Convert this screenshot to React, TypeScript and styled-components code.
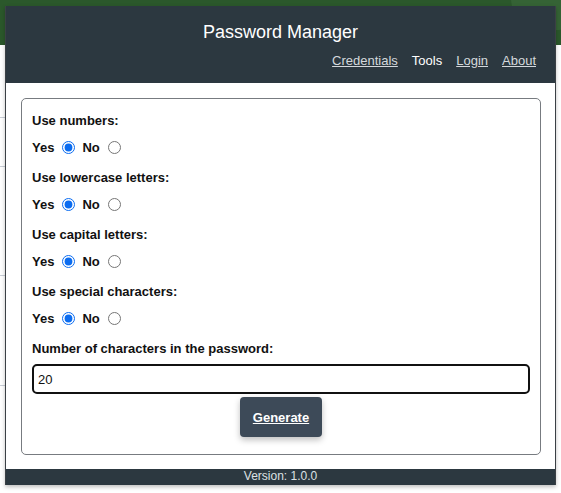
import { useState } from "react";
import styled, { createGlobalStyle } from "styled-components";

const GlobalStyle = createGlobalStyle`
  html, body {
    margin: 0;
    padding: 0;
    background: #ffffff;
    font-family: "Liberation Sans", Arial, sans-serif;
  }
`;

const Page = styled.div`
  position: relative;
  width: 561px;
  height: 493px;
  overflow: hidden;
  background: #ffffff;
`;

const GreenBar = styled.div`
  height: 45px;
  background: #2b582b;
  position: relative;
  overflow: hidden;
`;

const GreenBlob = styled.div`
  position: absolute;
  right: -40px;
  top: -30px;
  width: 90px;
  height: 60px;
  border-radius: 50%;
  background: #356335;
`;

const SideLines = styled.div`
  display: flex;
  flex-direction: column;
  width: 6px;
`;

const SideLine = styled.div<{ $gap: number }>`
  margin-top: ${(p) => p.$gap}px;
  height: 1px;
  background: #c9ced6;
`;

const Popup = styled.div`
  position: absolute;
  left: 5px;
  top: 6px;
  width: 549px;
  border-left: 1px solid #3b4045;
  border-right: 1px solid #3b4045;
  background: #ffffff;
  box-shadow: 0 2px 4px rgba(0, 0, 0, 0.25);
  display: flex;
  flex-direction: column;
`;

const Header = styled.header`
  height: 77px;
  background: #2c3840;
  display: flex;
  flex-direction: column;
  box-sizing: border-box;
  padding: 15px 19px 0 0;
`;

const Title = styled.h1`
  margin: 0;
  text-align: center;
  font-size: 18px;
  font-weight: normal;
  line-height: 22px;
  color: #ffffff;
  padding-left: 19px;
`;

const Nav = styled.nav`
  display: flex;
  justify-content: flex-end;
  gap: 14px;
  margin-top: 10px;
`;

const NavLink = styled.a<{ $active?: boolean }>`
  font-size: 13px;
  line-height: 16px;
  color: ${(p) => (p.$active ? "#ffffff" : "#d4d8dc")};
  text-decoration: ${(p) => (p.$active ? "none" : "underline")};
  cursor: pointer;
`;

const Main = styled.main`
  padding: 15px 14px 14px 15px;
`;

const Card = styled.form`
  border: 1px solid #777b80;
  border-radius: 5px;
  padding: 14px 10px 17px 10px;
  display: flex;
  flex-direction: column;
`;

const Group = styled.div`
  display: flex;
  flex-direction: column;
  gap: 10px;
  margin-bottom: 15px;
`;

const Label = styled.div`
  font-size: 13px;
  font-weight: bold;
  line-height: 16px;
  color: #111111;
`;

const RadioRow = styled.div`
  display: flex;
  align-items: center;
  height: 16px;
  font-size: 13px;
  font-weight: bold;
  color: #111111;
`;

const Radio = styled.input`
  width: 13px;
  height: 13px;
  margin: 0 7px 0 8px;
  accent-color: #0b6cf0;
`;

const LengthInput = styled.input`
  margin-top: 7px;
  box-sizing: border-box;
  width: 100%;
  height: 30px;
  border: 2px solid #111111;
  border-radius: 5px;
  padding: 0 4px;
  font-family: "Liberation Sans", Arial, sans-serif;
  font-size: 13px;
  color: #111111;
  outline: none;
`;

const GenerateButton = styled.button`
  align-self: center;
  margin-top: 3px;
  width: 82px;
  height: 40px;
  border: none;
  border-radius: 4px;
  background: #3d4a58;
  color: #ffffff;
  font-family: "Liberation Sans", Arial, sans-serif;
  font-size: 13px;
  font-weight: bold;
  text-decoration: underline;
  box-shadow: 0 3px 6px rgba(0, 0, 0, 0.25);
  cursor: pointer;
`;

const Footer = styled.footer`
  height: 16px;
  background: #2c3840;
  color: #dde1e4;
  font-size: 12px;
  line-height: 15px;
  text-align: center;
`;

const options = [
  { key: "numbers", label: "Use numbers:" },
  { key: "lower", label: "Use lowercase letters:" },
  { key: "capital", label: "Use capital letters:" },
  { key: "special", label: "Use special characters:" },
];

const App = () => {
  const [choices, setChoices] = useState<Record<string, boolean>>({
    numbers: true,
    lower: true,
    capital: true,
    special: true,
  });
  const [length, setLength] = useState("20");

  return (
    <>
      <GlobalStyle />
      <Page>
        <GreenBar>
          <GreenBlob />
        </GreenBar>
        <SideLines>
          <SideLine $gap={72} />
          <SideLine $gap={48} />
          <SideLine $gap={108} />
          <SideLine $gap={109} />
        </SideLines>
        <Popup>
          <Header>
            <Title>Password Manager</Title>
            <Nav>
              <NavLink>Credentials</NavLink>
              <NavLink $active>Tools</NavLink>
              <NavLink>Login</NavLink>
              <NavLink>About</NavLink>
            </Nav>
          </Header>
          <Main>
            <Card onSubmit={(e) => e.preventDefault()}>
              {options.map((opt) => (
                <Group key={opt.key}>
                  <Label>{opt.label}</Label>
                  <RadioRow>
                    Yes
                    <Radio
                      type="radio"
                      name={opt.key}
                      checked={choices[opt.key]}
                      onChange={() => setChoices({ ...choices, [opt.key]: true })}
                    />
                    No
                    <Radio
                      type="radio"
                      name={opt.key}
                      checked={!choices[opt.key]}
                      onChange={() => setChoices({ ...choices, [opt.key]: false })}
                    />
                  </RadioRow>
                </Group>
              ))}
              <Label>Number of characters in the password:</Label>
              <LengthInput
                type="text"
                value={length}
                onChange={(e) => setLength(e.target.value)}
              />
              <GenerateButton type="submit">Generate</GenerateButton>
            </Card>
          </Main>
          <Footer>Version: 1.0.0</Footer>
        </Popup>
      </Page>
    </>
  );
};

export default App;
